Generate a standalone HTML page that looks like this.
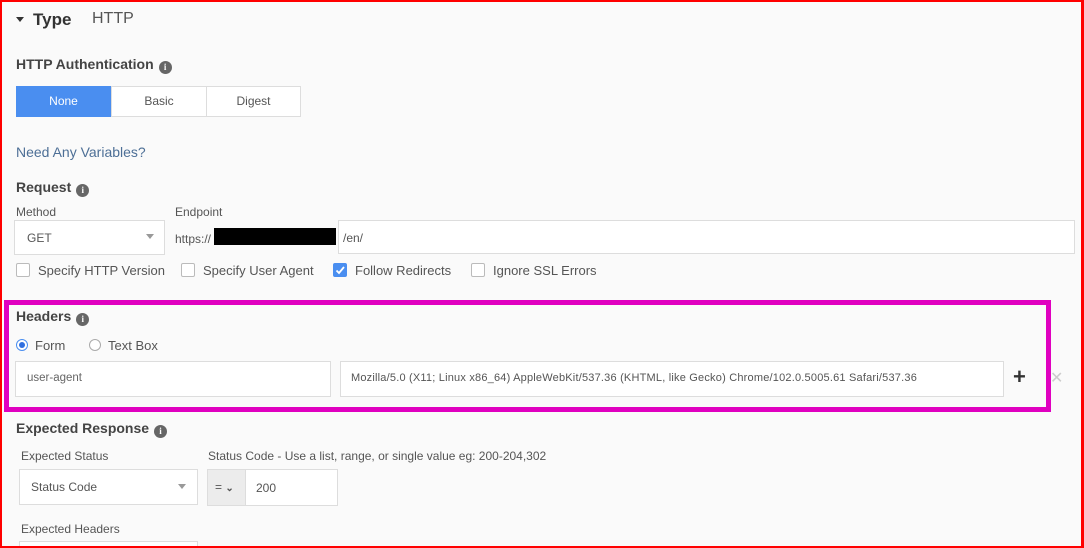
<!DOCTYPE html>
<html style="overflow:hidden"><head><style>
*{box-sizing:border-box;margin:0;padding:0}
html,body{width:1084px;height:548px;overflow:hidden}
body{background:#fafafa;font-family:"Liberation Sans",sans-serif;color:#555;position:relative;font-size:12px}
.a{position:absolute;white-space:nowrap}
.frame{position:absolute;left:0;top:0;width:1084px;height:548px;border:2px solid #f00;border-right-width:3px;z-index:5}
.b{font-weight:bold;color:#444;font-size:14px}
.i{display:inline-block;width:13px;height:13px;border-radius:50%;background:#666;color:#fff;font-size:9px;text-align:center;line-height:13px;font-weight:bold;vertical-align:-1px;margin-left:5px;font-family:"Liberation Serif",serif}
.inp{position:absolute;background:#fff;border:1px solid #ddd}
.cb{position:absolute;width:14px;height:14px;border:1px solid #bbb;border-radius:2px;background:#fff}
.caret{position:absolute;width:0;height:0;border-left:4px solid transparent;border-right:4px solid transparent;border-top:5px solid #999}
.l{font-size:12px}
</style></head><body>
<div class="frame"></div>
<div class="a" style="left:16px;top:17px;border-left:4px solid transparent;border-right:4px solid transparent;border-top:5px solid #333"></div>
<div class="a" style="left:33px;top:10px;font-size:17px;font-weight:bold;color:#333">Type</div>
<div class="a" style="left:92px;top:10px;font-size:16px;color:#555">HTTP</div>
<div class="a b" style="left:16px;top:56px">HTTP Authentication<span class="i">i</span></div>
<div class="a" style="left:16px;top:86px;width:95px;height:31px;background:#4a8ef0;color:#fff;text-align:center;line-height:31px;font-size:12px">None</div>
<div class="inp" style="left:111px;top:86px;width:96px;height:31px;text-align:center;line-height:29px;font-size:12px;color:#555">Basic</div>
<div class="inp" style="left:206px;top:86px;width:95px;height:31px;text-align:center;line-height:29px;font-size:12px;color:#555">Digest</div>
<div class="a" style="left:16px;top:144px;font-size:14px;color:#4d6f96">Need Any Variables?</div>
<div class="a b" style="left:16px;top:179px">Request<span class="i">i</span></div>
<div class="a l" style="left:16px;top:205px">Method</div>
<div class="a l" style="left:175px;top:205px">Endpoint</div>
<div class="inp" style="left:14px;top:220px;width:151px;height:35px"></div>
<div class="a l" style="left:27px;top:231px">GET</div>
<div class="caret" style="left:146px;top:234px"></div>
<div class="a l" style="left:175px;top:232px">https://</div>
<div class="a" style="left:214px;top:228px;width:122px;height:17px;background:#000"></div>
<div class="inp" style="left:338px;top:220px;width:737px;height:34px"></div>
<div class="a l" style="left:343px;top:231px">/en/</div>
<div class="cb" style="left:16px;top:263px"></div><div class="a" style="left:38px;top:263px;font-size:13px">Specify HTTP Version</div>
<div class="cb" style="left:181px;top:263px"></div><div class="a" style="left:203px;top:263px;font-size:13px">Specify User Agent</div>
<div class="cb" style="left:333px;top:263px;background:#4a8ef0;border-color:#4a8ef0"><svg width="12" height="12" style="position:absolute;left:0;top:0"><path d="M2.5 6.5 L5 9 L10 3" stroke="#fff" stroke-width="1.8" fill="none"/></svg></div><div class="a" style="left:355px;top:263px;font-size:13px">Follow Redirects</div>
<div class="cb" style="left:471px;top:263px"></div><div class="a" style="left:493px;top:263px;font-size:13px">Ignore SSL Errors</div>
<div class="a" style="left:4px;top:300px;width:1047px;height:112px;border:5px solid #e000c0"></div>
<div class="a b" style="left:16px;top:308px">Headers<span class="i">i</span></div>
<div class="a" style="left:16px;top:339px;width:12px;height:12px;border-radius:50%;border:1px solid #4a8ef0;background:#fff"><div style="position:absolute;left:2px;top:2px;width:6px;height:6px;border-radius:50%;background:#2f6fe0"></div></div>
<div class="a" style="left:35px;top:338px;font-size:13px">Form</div>
<div class="a" style="left:89px;top:339px;width:12px;height:12px;border-radius:50%;border:1px solid #aaa;background:#fff"></div>
<div class="a" style="left:108px;top:338px;font-size:13px">Text Box</div>
<div class="inp" style="left:15px;top:361px;width:316px;height:36px"></div>
<div class="a" style="left:27px;top:372px;font-size:11.5px;color:#666">user-agent</div>
<div class="inp" style="left:340px;top:361px;width:664px;height:36px"></div>
<div class="a" style="left:351px;top:372px;font-size:11px;letter-spacing:0.2px;color:#555">Mozilla/5.0 (X11; Linux x86_64) AppleWebKit/537.36 (KHTML, like Gecko) Chrome/102.0.5005.61 Safari/537.36</div>
<div class="a" style="left:1013px;top:364px;font-size:22px;font-weight:bold;color:#333">+</div>
<div class="a" style="left:1050px;top:368px;font-size:16px;color:#ccc">✕</div>
<div class="a b" style="left:16px;top:420px">Expected Response<span class="i">i</span></div>
<div class="a l" style="left:21px;top:449px">Expected Status</div>
<div class="a l" style="left:208px;top:449px">Status Code - Use a list, range, or single value eg: 200-204,302</div>
<div class="inp" style="left:19px;top:469px;width:179px;height:36px"></div>
<div class="a l" style="left:31px;top:480px">Status Code</div>
<div class="caret" style="left:178px;top:484px"></div>
<div class="inp" style="left:207px;top:469px;width:131px;height:37px"></div>
<div class="a" style="left:208px;top:470px;width:38px;height:35px;background:#ececec;border-right:1px solid #ddd"></div>
<div class="a" style="left:215px;top:480px;font-size:12px;color:#555">= <b style="font-size:10px">&#8964;</b></div>
<div class="a l" style="left:256px;top:481px">200</div>
<div class="a l" style="left:21px;top:522px">Expected Headers</div>
<div class="inp" style="left:19px;top:541px;width:179px;height:7px;border-bottom:none"></div>
</body></html>
